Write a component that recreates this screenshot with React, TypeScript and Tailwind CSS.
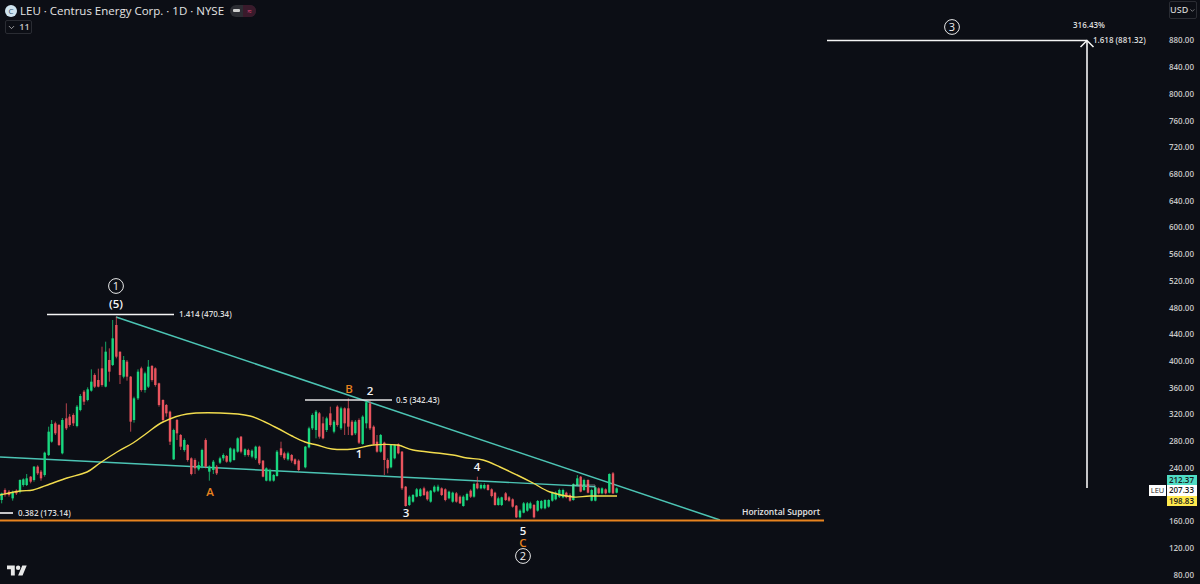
import { ChevronDown } from 'lucide-react';

type Candle = [string, number, number, number, number?, number?];

// zoomed-in readings: [colour, x, body top, body bottom, wick top, wick bottom]
const leftCandles: Candle[] = [
  ['g', 5, 670, 690, 668, 700], ['r', 15, 660, 672, 655, 680], ['r', 27, 665, 675, 660, 680], ['g', 38, 668, 685, 662, 692],
  ['r', 49, 662, 670, 658, 675], ['g', 60, 630, 665, 628, 670], ['g', 70, 628, 645, 625, 650], ['g', 80, 625, 645, 612, 648],
  ['r', 92, 620, 635, 618, 640], ['g', 102, 590, 630, 588, 635], ['r', 113, 590, 610, 586, 615], ['r', 123, 605, 625, 600, 632],
  ['g', 134, 548, 615, 545, 620], ['g', 146, 485, 555, 470, 558], ['g', 155, 462, 515, 450, 518], ['r', 166, 460, 490, 455, 495],
  ['r', 177, 465, 525, 462, 528], ['g', 187, 450, 550, 444, 553], ['r', 199, 445, 475, 400, 480], ['r', 209, 440, 465, 432, 470],
  ['r', 220, 435, 460, 430, 468], ['g', 231, 410, 468, 405, 472], ['g', 241, 378, 420, 372, 424], ['r', 252, 365, 395, 360, 405],
  ['g', 263, 358, 390, 352, 394], ['g', 274, 335, 362, 298, 365], ['r', 284, 315, 350, 310, 354], ['r', 295, 330, 350, 296, 352],
  ['r', 306, 295, 345, 230, 350], ['g', 317, 245, 350, 215, 352], ['r', 328, 270, 305, 235, 335], ['g', 338, 205, 285, 150, 288],
  ['r', 349, 165, 260, 140, 265], ['r', 360, 245, 315, 245, 342], ['g', 371, 270, 320, 258, 325], ['r', 381, 275, 320, 270, 332],
  ['r', 392, 320, 455, 318, 485], ['g', 402, 385, 450, 380, 458], ['g', 414, 305, 385, 298, 390], ['r', 424, 295, 360, 290, 365],
  ['g', 435, 310, 360, 305, 368], ['g', 445, 290, 350, 270, 354], ['r', 456, 288, 330, 285, 335], ['r', 466, 295, 345, 292, 350],
  ['r', 477, 340, 405, 338, 410], ['r', 489, 390, 450, 388, 455], ['r', 499, 405, 430, 402, 440], ['r', 510, 425, 515, 422, 525],
  ['g', 521, 480, 568, 476, 570], ['r', 531, 450, 490, 447, 510], ['r', 542, 495, 530, 492, 540], ['g', 553, 510, 540, 505, 545],
  ['r', 563, 525, 570, 522, 575], ['r', 574, 565, 612, 562, 616], ['r', 585, 570, 595, 565, 612], ['g', 596, 585, 598, 575, 602],
  ['g', 606, 540, 590, 536, 595], ['r', 617, 510, 590, 505, 595], ['g', 628, 590, 605, 586, 632], ['g', 640, 575, 600, 570, 612],
  ['r', 650, 590, 610, 585, 615], ['g', 660, 565, 578, 560, 582], ['g', 670, 555, 565, 550, 572], ['r', 680, 558, 575, 555, 578],
  ['g', 691, 535, 575, 532, 578], ['g', 702, 538, 570, 534, 572], ['g', 713, 505, 545, 502, 548], ['r', 723, 500, 545, 498, 550],
  ['g', 735, 538, 555, 535, 560], ['r', 745, 540, 555, 536, 560], ['g', 756, 542, 560, 538, 565], ['g', 767, 530, 565, 527, 570],
  ['r', 778, 530, 580, 527, 585], ['r', 789, 572, 620, 570, 622], ['g', 799, 595, 632, 592, 634], ['g', 810, 600, 632, 596, 635],
  ['g', 821, 615, 632, 612, 635], ['g', 831, 545, 618, 540, 620], ['r', 843, 535, 555, 515, 560], ['r', 853, 550, 565, 545, 570],
  ['g', 864, 550, 568, 545, 572], ['r', 875, 555, 572, 552, 578], ['r', 885, 568, 582, 565, 586], ['r', 896, 572, 600, 568, 604],
];

const middleCandles: Candle[] = [
  ['g', 76, 230, 292, 228, 295], ['g', 87, 175, 232, 170, 235], ['g', 97, 135, 175, 130, 180], ['g', 108, 125, 180, 120, 205],
  ['r', 118, 130, 200, 126, 206], ['r', 129, 160, 205, 140, 208], ['g', 140, 145, 180, 140, 186], ['r', 151, 130, 165, 110, 170],
  ['g', 162, 155, 185, 150, 190], ['r', 172, 110, 165, 106, 170], ['g', 183, 115, 175, 110, 180], ['r', 194, 115, 160, 112, 195],
  ['r', 205, 115, 170, 85, 195], ['r', 216, 155, 195, 150, 198], ['g', 226, 155, 190, 150, 195], ['r', 237, 150, 218, 145, 222],
  ['g', 248, 140, 222, 136, 224], ['g', 259, 97, 160, 92, 175], ['r', 270, 100, 175, 92, 180], ['r', 281, 170, 222, 166, 226],
  ['r', 291, 215, 245, 195, 248], ['g', 302, 195, 245, 192, 248], ['r', 313, 218, 270, 215, 315], ['r', 323, 270, 295, 265, 310],
  ['g', 333, 225, 292, 222, 295], ['g', 344, 225, 265, 222, 268], ['r', 355, 222, 250, 220, 253], ['r', 366, 245, 355, 243, 360],
  ['r', 377, 350, 408, 348, 410], ['g', 388, 380, 405, 376, 408], ['g', 399, 375, 395, 372, 398], ['g', 410, 358, 380, 354, 382],
  ['g', 421, 358, 378, 354, 380], ['r', 432, 355, 375, 350, 378], ['r', 442, 365, 388, 362, 392], ['g', 452, 362, 395, 360, 398],
  ['g', 463, 350, 365, 346, 368], ['g', 474, 350, 362, 344, 366], ['r', 485, 355, 375, 352, 378], ['r', 496, 358, 390, 355, 394],
  ['g', 507, 365, 385, 362, 388], ['g', 518, 368, 395, 365, 398], ['r', 529, 370, 395, 366, 398], ['r', 540, 380, 400, 376, 402],
  ['g', 550, 380, 408, 376, 410], ['g', 561, 372, 390, 368, 393], ['r', 572, 362, 380, 358, 384], ['g', 582, 342, 380, 338, 383],
  ['r', 592, 340, 355, 320, 358], ['g', 603, 345, 355, 340, 358], ['g', 613, 345, 355, 340, 358], ['r', 624, 345, 360, 342, 362],
  ['r', 635, 358, 378, 355, 382], ['r', 645, 368, 405, 365, 407], ['g', 655, 385, 405, 380, 407],
];

const rightCandles: Candle[] = [
  ['g', 5, 172, 195, 170, 198], ['r', 17, 160, 180, 156, 183], ['r', 27, 172, 182, 168, 185], ['r', 38, 178, 200, 175, 203],
  ['r', 49, 197, 232, 195, 234], ['g', 60, 212, 232, 208, 235], ['g', 71, 190, 218, 186, 220], ['g', 82, 190, 212, 186, 215],
  ['g', 91, 190, 205, 185, 208], ['r', 102, 195, 232, 192, 235], ['g', 113, 183, 212, 180, 215], ['g', 124, 183, 205, 180, 208],
  ['g', 135, 180, 205, 178, 208], ['g', 146, 180, 200, 178, 203], ['g', 157, 158, 182, 155, 185], ['g', 167, 158, 178, 154, 181],
  ['g', 178, 150, 170, 146, 174], ['g', 189, 150, 172, 146, 175], ['r', 199, 158, 172, 155, 175], ['r', 210, 165, 182, 160, 185],
  ['g', 220, 132, 180, 130, 182], ['g', 232, 115, 135, 105, 138], ['r', 242, 110, 155, 108, 157], ['g', 252, 120, 150, 116, 153],
  ['r', 264, 120, 158, 118, 160], ['g', 275, 150, 182, 146, 184], ['g', 286, 142, 182, 140, 184], ['r', 296, 145, 160, 142, 163],
  ['g', 306, 145, 160, 142, 163], ['r', 317, 148, 160, 145, 163], ['g', 328, 102, 158, 100, 160], ['r', 339, 100, 160, 96, 162],
  ['g', 350, 145, 158, 142, 160],
];

// moving average, read off the reference
const maPoints = [
  [0, 495], [20, 491], [33, 490], [50, 484], [67, 478], [87, 472], [100, 463], [117, 452], [133, 443], [147, 433], [163, 422],
  [187, 414], [220, 413], [250, 416], [275, 427], [292, 436], [305, 442], [317, 445], [332, 449], [353, 449], [373, 445], [397, 445],
  [413, 450], [437, 453], [453, 455], [467, 458], [483, 460], [500, 467], [517, 475], [533, 483], [550, 492], [573, 497], [590, 496], [617, 496],
];

function smoothPath(pts: number[][]) {
  let d = `M${pts[0][0]},${pts[0][1]}`;
  for (let i = 0; i < pts.length - 1; i++) {
    const p0 = pts[Math.max(i - 1, 0)];
    const p1 = pts[i];
    const p2 = pts[i + 1];
    const p3 = pts[Math.min(i + 2, pts.length - 1)];
    d += `C${p1[0] + (p2[0] - p0[0]) / 6},${p1[1] + (p2[1] - p0[1]) / 6} ${p2[0] - (p3[0] - p1[0]) / 6},${p2[1] - (p3[1] - p1[1]) / 6} ${p2[0]},${p2[1]}`;
  }
  return d;
}

const prices = Array.from({ length: 21 }, (_, i) => 880 - i * 40);

function Candles({ data, ox, oy }: { data: Candle[]; ox: number; oy: number }) {
  return (
    <>
      {data.map(([c, x, top, bot, wt, wb]) => {
        const cx = ox + x / 3;
        const fill = c === 'g' ? '#19d77f' : '#e9545e';
        return (
          <g key={x} fill={fill}>
            <rect x={cx - 0.5} y={oy + (wt ?? top) / 3} width={1} height={((wb ?? bot) - (wt ?? top)) / 3} opacity={0.75} />
            <rect x={cx - 1.2} y={oy + top / 3} width={2.4} height={(bot - top) / 3} />
          </g>
        );
      })}
    </>
  );
}

function Ring({ x, y, n }: { x: number; y: number; n: string }) {
  return (
    <g>
      <circle cx={x} cy={y} r={7.4} fill="none" stroke="#e8e8e8" strokeWidth={1} />
      <text x={x} y={y + 4} textAnchor="middle" fill="#f2f2f2" className="text-[11px] font-medium">
        {n}
      </text>
    </g>
  );
}

function Mark({ x, y, t, orange }: { x: number; y: number; t: string; orange?: boolean }) {
  return (
    <text x={x} y={y} textAnchor="middle" fill={orange ? '#e8831f' : '#f5f5f5'} className="text-[11.5px] font-semibold">
      {t}
    </text>
  );
}

function Note({ x, y, t }: { x: number; y: number; t: string }) {
  return (
    <text x={x} y={y} fill="#dcdcdc" className="text-[8px] font-semibold">
      {t}
    </text>
  );
}

export default function App() {
  return (
    <div className="relative flex h-[584px] w-[1200px] overflow-hidden bg-[#0c0e15] font-['Open_Sans',sans-serif] text-[#d8d8d8]">
      {/* chart */}
      <div className="relative h-full flex-1">
        <svg width={1165} height={584} className="block">
          <polyline points="0,457 595,486.7" fill="none" stroke="#4cc4b4" strokeWidth={1.4} />
          <line x1={116} y1={317} x2={720} y2={520} stroke="#4cc4b4" strokeWidth={1.5} />
          <Candles data={leftCandles} ox={0} oy={270} />
          <Candles data={middleCandles} ox={280} oy={370} />
          <Candles data={rightCandles} ox={500} oy={440} />
          <path d={smoothPath(maPoints)} fill="none" stroke="#f2dc4e" strokeWidth={1.4} />
          <polyline points="573,497 573,485 595,485 595,497" fill="none" stroke="#d8d8d8" strokeWidth={0.8} opacity={0.6} />

          <line x1={47} y1={314.5} x2={174} y2={314.5} stroke="#f5f5f5" strokeWidth={1.6} />
          <line x1={305} y1={400} x2={392} y2={400} stroke="#e4e4e4" strokeWidth={1.6} />
          <line x1={0} y1={513} x2={13} y2={513} stroke="#f5f5f5" strokeWidth={1.6} />
          <line x1={0} y1={520.5} x2={824} y2={520.5} stroke="#e8831f" strokeWidth={1.8} />

          <line x1={827} y1={40.5} x2={1087} y2={40.5} stroke="#f5f5f5" strokeWidth={1.6} />
          <line x1={1087} y1={41} x2={1087} y2={488} stroke="#f5f5f5" strokeWidth={1.6} />
          <polyline points="1080.5,47 1087,40.5 1093.5,47" fill="none" stroke="#f5f5f5" strokeWidth={1.5} />

          <Note x={179} y={317} t="1.414 (470.34)" />
          <Note x={396} y={403} t="0.5 (342.43)" />
          <Note x={18} y={516} t="0.382 (173.14)" />
          <Note x={1093} y={43} t="1.618 (881.32)" />
          <Note x={1073} y={28} t="316.43%" />
          <text x={742} y={515} fill="#e4e4e4" className="text-[8.5px] font-semibold">
            Horizontal Support
          </text>

          <Ring x={116} y={286} n="1" />
          <Mark x={116} y={308} t="(5)" />
          <Ring x={952} y={27} n="3" />
          <Ring x={523} y={556} n="2" />
          <Mark x={523} y={535} t="5" />
          <Mark x={523} y={547} t="C" orange />
          <Mark x={210} y={496} t="A" orange />
          <Mark x={349} y={393} t="B" orange />
          <Mark x={370} y={395} t="2" />
          <Mark x={359} y={458} t="1" />
          <Mark x={406} y={517} t="3" />
          <Mark x={477} y={471} t="4" />
        </svg>

        {/* header */}
        <div className="absolute left-[5px] top-[3px] flex flex-col items-start gap-[2px]">
          <div className="flex h-[15px] items-center gap-[2px]">
            <div className="flex h-[12px] w-[12px] items-center justify-center rounded-full bg-[#cfe3ee] text-[8px] leading-none text-[#2f4d66]">
              C
            </div>
            <span className="ml-[1px] whitespace-nowrap text-[11.5px] font-medium text-[#e4e4e4]">
              LEU · Centrus Energy Corp. · 1D · NYSE
            </span>
            <div className="ml-[4px] flex h-[12px] w-[26px] items-center gap-[3px] rounded-full bg-[#2c2d33] pl-[3px]">
              <span className="h-[3px] w-[7px] rounded-[1px] bg-[#cfcfcf]" />
              <span className="flex h-[12px] flex-1 items-center justify-center rounded-r-full bg-[#3a1a2b] text-[8px] leading-none text-[#e0457b]">
                ≈
              </span>
            </div>
          </div>
          <div className="flex h-[14px] w-[27px] items-center justify-center gap-[3px] rounded-[2px] border border-[#2a2c33] text-[9px] font-semibold text-[#c8c8c8]">
            <ChevronDown size={9} />
            <span>11</span>
          </div>
        </div>

        {/* logo */}
        <svg width={20} height={16} viewBox="0 0 36 28" className="absolute bottom-[5px] left-[7px]" fill="#e8e8e8">
          <path d="M14 22H7V11H0V4h14v18ZM28 22h-8l7.5-18h8L28 22Z" />
          <circle cx="20" cy="8" r="4" />
        </svg>

        {/* last price tags */}
        <div className="absolute left-[1149px] top-[485px] flex h-[11px] w-[17px] items-center justify-center bg-white text-[7.5px] font-medium text-[#222]">
          LEU
        </div>
      </div>

      {/* price axis */}
      <div className="relative flex w-[35px] flex-col items-end pr-[6px] pt-[27px] text-[8px] font-semibold text-[#c8c8c8]">
        {prices.map((p) => (
          <div key={p} className="flex h-[26.72px] shrink-0 items-center">
            {p === 200 ? '' : p.toFixed(2)}
          </div>
        ))}
        <div className="absolute right-[3px] top-[1px] flex h-[18px] w-[28px] items-center justify-center gap-[1px] rounded-[2px] border border-[#2a2c33] bg-[#0c0e15] text-[9px]">
          USD
          <ChevronDown size={7} />
        </div>
        <div className="absolute left-[2px] top-[475px] flex w-[30px] flex-col text-[8px] leading-[10.3px] text-[#1a1a1a]">
          <div className="bg-[#4fdcc4] pr-[3px] text-right">212.37</div>
          <div className="bg-white pr-[3px] text-right">207.33</div>
          <div className="bg-[#ffe94d] pr-[3px] text-right">198.83</div>
        </div>
      </div>
    </div>
  );
}
